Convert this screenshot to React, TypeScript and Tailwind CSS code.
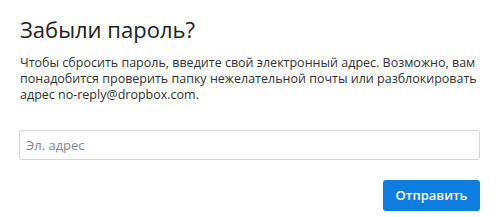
import React from "react";

export default function App() {
  return (
    <div className="w-[500px] h-[217px] bg-white px-5 pt-[13px] font-['Open_Sans',sans-serif] text-[#333]">
      <h1 className="text-[22px] leading-[32px] font-normal text-[#222]">Забыли пароль?</h1>
      <p className="mt-[10px] text-[12.5px] leading-[16px] text-[#333]">
        Чтобы сбросить пароль, введите свой электронный адрес. Возможно, вам понадобится проверить папку нежелательной почты или разблокировать адрес no-reply@dropbox.com.
      </p>
      <input
        type="text"
        placeholder="Эл. адрес"
        className="mt-[27px] block w-[461px] -ml-[1px] h-[30px] rounded-[3px] border border-[#d6d6d6] px-[6px] text-[13px] placeholder:text-[#888] outline-none"
      />
      <div className="mt-[20px] flex justify-end">
        <button className="h-[31px] w-[97px] rounded-[3px] bg-[#0d7de0] text-[13px] font-semibold text-white">
          Отправить
        </button>
      </div>
    </div>
  );
}
